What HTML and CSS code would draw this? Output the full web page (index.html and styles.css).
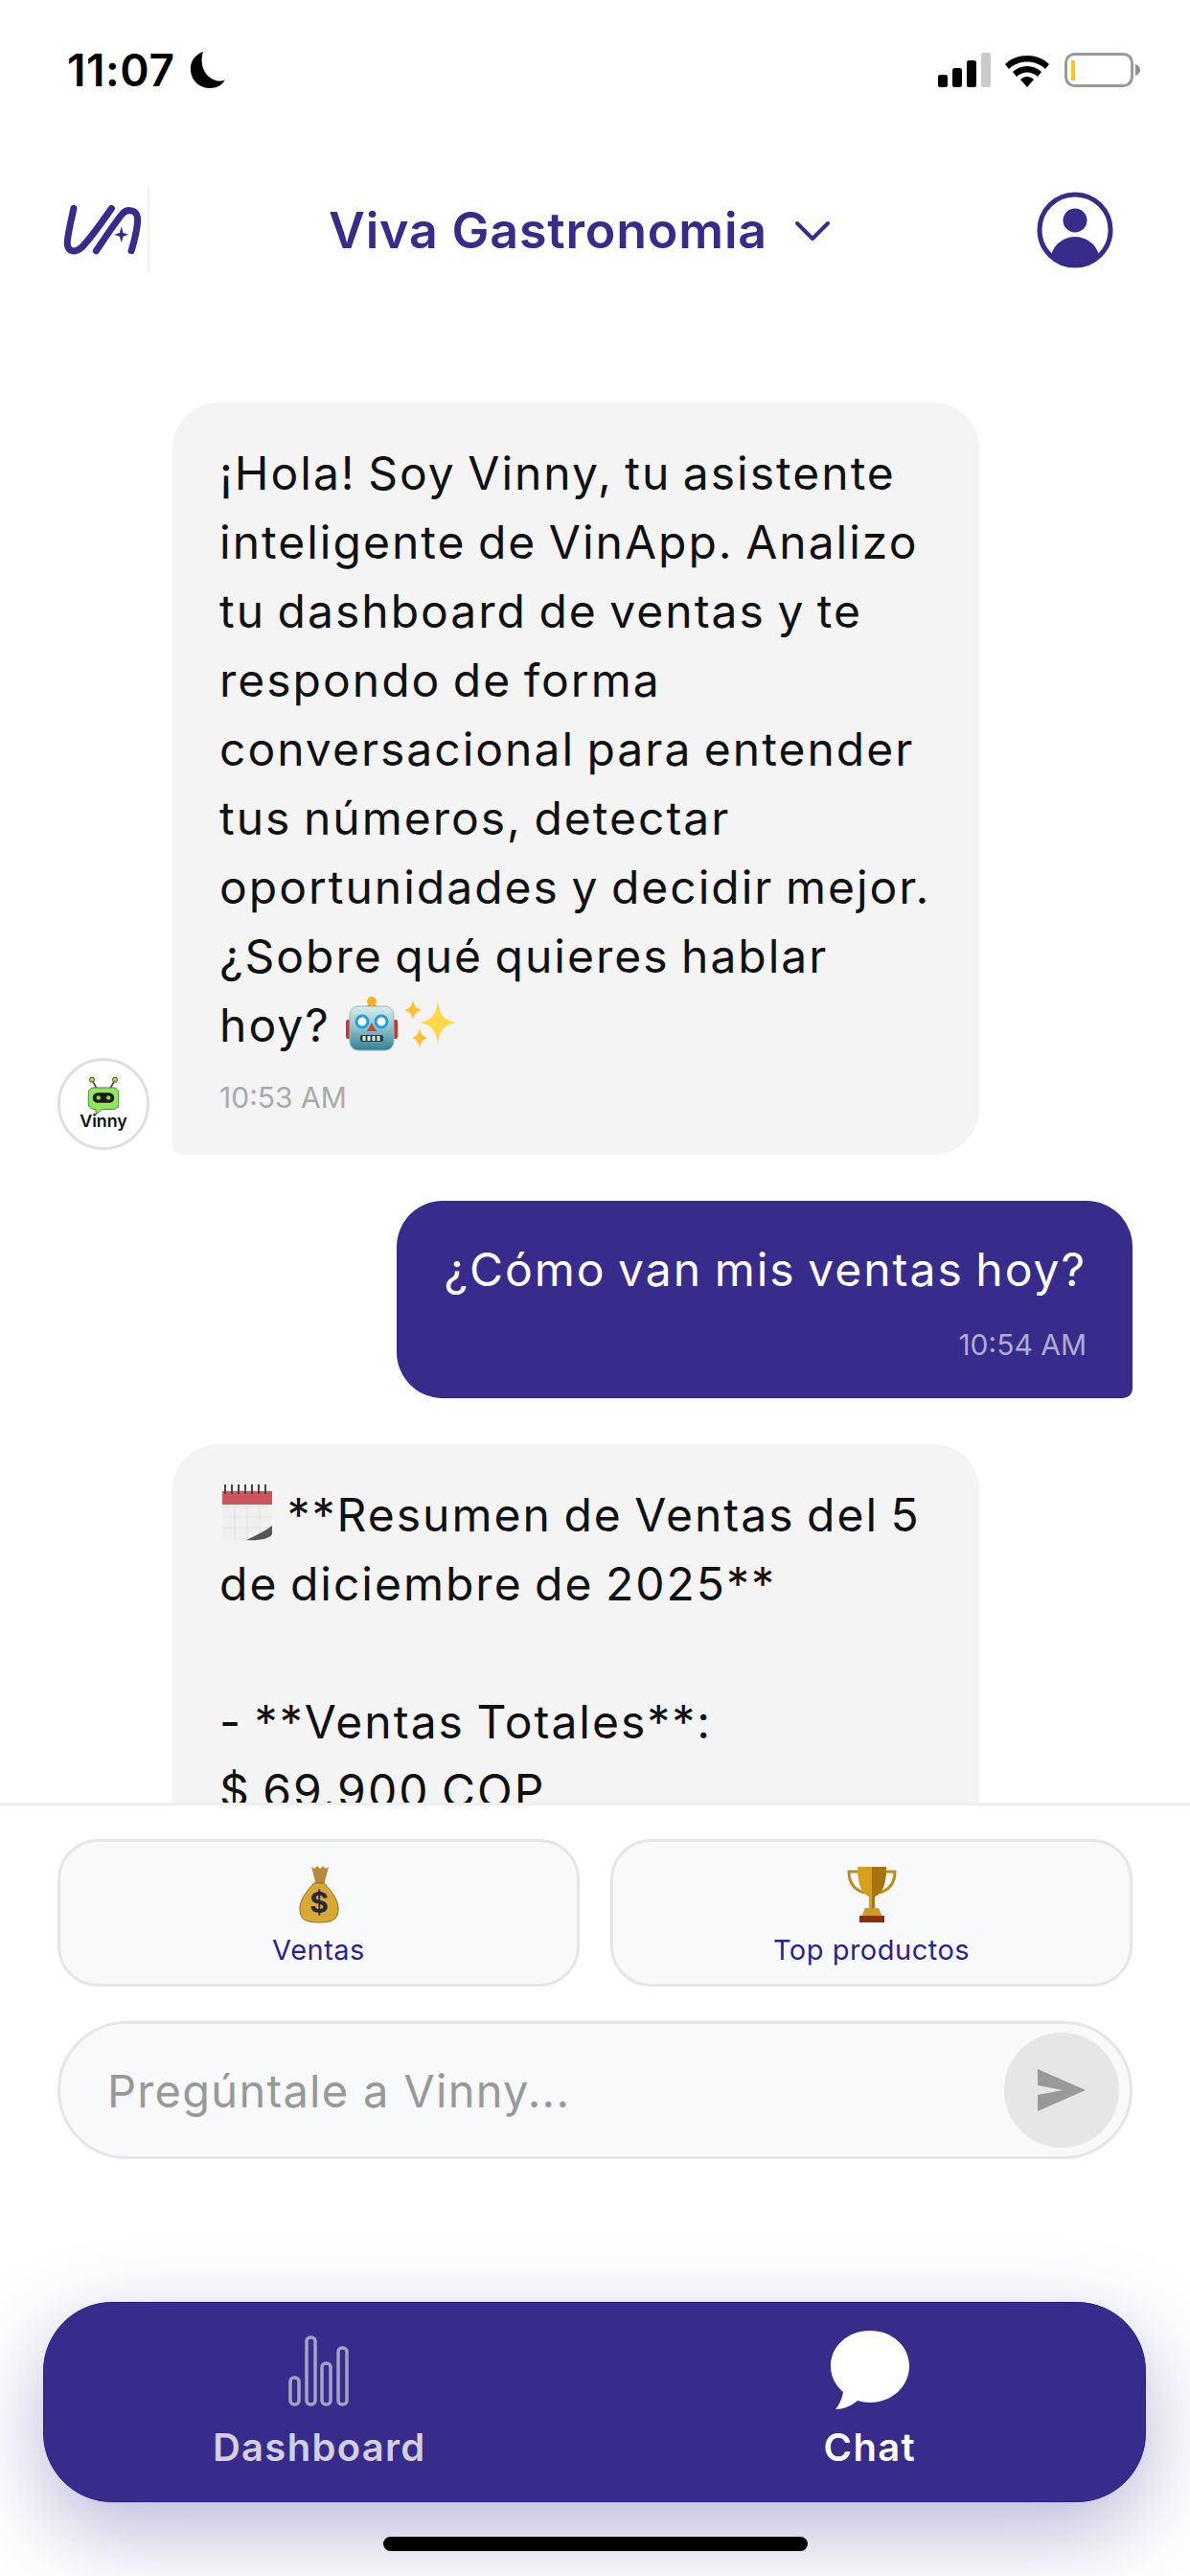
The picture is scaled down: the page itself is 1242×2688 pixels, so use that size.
FILE: index.html
```html
<!DOCTYPE html>
<html lang="es">
<head>
  <meta charset="UTF-8" />
  <meta name="viewport" content="width=device-width, initial-scale=1.0" />
  <title>Vinny Chat</title>
  <link rel="stylesheet" href="styles.css">
</head>
<body>
  <div class="app">
    <div class="status-bar">
      <div class="status-left">
        <span class="clock">11:07</span>
        <svg class="moon" viewBox="0 0 38 40"><path d="M14 1C5 4 0 12 1 21c1 11 10 18 20 18 7 0 13-3 16-9-3 2-8 2-12 0C15 26 10 13 14 1z"/></svg>
      </div>
      <svg class="status-icons" viewBox="0 0 212 36">
        <rect x="0" y="23" width="10" height="13" rx="2.5"/>
        <rect x="15" y="16" width="10" height="20" rx="2.5"/>
        <rect x="30" y="8" width="10" height="28" rx="2.5"/>
        <rect x="45" y="0" width="10" height="36" rx="2.5" fill="#cbcbcb"/>
        <path d="M70 12C82 0 104 0 116 12l-4 5C102 7 84 7 74 17z"/>
        <path d="M78 20c8-8 22-8 30 0l-4 5c-6-6-16-6-22 0z"/>
        <path d="M86 28c4-4 10-4 14 0l-7 8z"/>
        <rect x="133.500" y="1.500" width="69" height="33" rx="9" fill="#fff" stroke="#9a9a9a" stroke-width="3"/>
        <rect x="139" y="8" width="4" height="21" fill="#fcc419"/>
        <path d="M206 12c3 1 5 3 5 6s-2 5-5 6z" fill="#8e8e8e"/>
      </svg>
    </div>

    <header class="top-bar">
      <div class="brand">
        <svg viewBox="-3 -6 100 100" class="brand-logo">
          <path d="M15 18C12 32 7 52 8 58c1 9 9 9 16 3C35 50 47 32 57 18" fill="none" stroke="#372c8c" stroke-width="7.500" stroke-linecap="round"/>
          <path d="M40 65C50 50 62 32 69 24c5-6 16-5 17 5 0 12-4 26-7 36" fill="none" stroke="#372c8c" stroke-width="7.500" stroke-linecap="round"/>
          <path d="M68 38l2 7 6 2-6 2-2 7-2-7-6-2 6-2z" fill="#372c8c"/>
        </svg>
      </div>
      <div class="venue">
        <span class="venue-name">Viva Gastronomia</span>
        <svg class="chevron" viewBox="0 0 38 22"><path d="M3 3l16 16L35 3" fill="none" stroke="#372c8c" stroke-width="4" stroke-linecap="round" stroke-linejoin="round"/></svg>
      </div>
      <svg class="profile" viewBox="0 0 80 80">
        <defs><clipPath id="profileClip"><circle cx="40" cy="40" r="36"/></clipPath></defs>
        <circle cx="40" cy="40" r="37" fill="#fff" stroke="#372c8c" stroke-width="5"/>
        <circle cx="40" cy="30" r="12.500" fill="#372c8c"/>
        <circle cx="40" cy="73" r="26" fill="#372c8c" clip-path="url(#profileClip)"/>
      </svg>
    </header>

    <main class="chat">
      <div class="msg-row">
        <div class="avatar">
          <svg viewBox="0 0 96 96">
            <g transform="translate(48 41) scale(.8) translate(-48 -38)">
              <path d="M38 24l-5-9M58 24l5-9" stroke="#333" stroke-width="2"/>
              <circle cx="32" cy="13" r="3.500" fill="#9bdc3c" stroke="#333"/>
              <circle cx="64" cy="13" r="3.500" fill="#9bdc3c" stroke="#333"/>
              <path d="M35 24h26c5 0 8 3 8 8v14c0 5-3 8-8 8H46l-8 7-1-7c-6 0-10-3-10-8V32c0-5 3-8 8-8z" fill="#8fe85a" stroke="#444"/>
              <rect x="33" y="31" width="30" height="14" rx="7" fill="#1a1a1a"/>
              <circle cx="41" cy="38" r="3" fill="#9bdc3c"/>
              <circle cx="55" cy="38" r="3" fill="#9bdc3c"/>
            </g>
            <text x="48" y="74" text-anchor="middle" class="avatar-name">Vinny</text>
          </svg>
        </div>
        <div class="bubble bot">
          <p class="bubble-text">¡Hola! Soy Vinny, tu asistente<br>inteligente de VinApp. Analizo<br>tu dashboard de ventas y te<br>respondo de forma<br>conversacional para entender<br>tus números, detectar<br>oportunidades y decidir mejor.<br>¿Sobre qué quieres hablar<br>hoy?
            <svg class="emoji robot" viewBox="0 0 56 58">
              <defs><linearGradient id="robotFace" x1="0" y1="0" x2="0" y2="1"><stop offset="0" stop-color="#d8eef0"/><stop offset="0.5" stop-color="#8fc0c8"/><stop offset="1" stop-color="#2f7f94"/></linearGradient></defs>
              <rect x="1" y="25" width="7" height="20" rx="2" fill="#c8362f"/>
              <rect x="48" y="25" width="7" height="20" rx="2" fill="#c8362f"/>
              <path d="M22 12c0-3 12-3 12 0v2H22z" fill="#6b4aa0"/>
              <circle cx="28" cy="6" r="5" fill="#ffb020"/>
              <rect x="5" y="11" width="46" height="46" rx="9" fill="url(#robotFace)" stroke="#9ab8bc"/>
              <circle cx="18" cy="27" r="6" fill="#fff" stroke="#1ba0d8" stroke-width="3"/>
              <circle cx="38" cy="27" r="6" fill="#fff" stroke="#1ba0d8" stroke-width="3"/>
              <path d="M28 28l5 9H23z" fill="#c8453f"/>
              <rect x="16" y="41" width="24" height="7" rx="2" fill="#233f4a"/>
              <path d="M20 42v5M25 42v5M30 42v5M35 42v5" stroke="#e8e8d8" stroke-width="3"/>
            </svg><svg class="emoji sparkles" viewBox="0 0 56 56">
              <path d="M35 3c2 14 5 20 19 23-14 3-17 9-19 23-2-14-5-20-19-23 14-3 17-9 19-23z" fill="#ffd94a"/>
              <path d="M9 2c1 7 3 9 9 11-6 2-8 4-9 11-1-7-3-9-9-11 6-2 8-4 9-11z" fill="#ffc02e"/>
              <path d="M16 31c1 7 3 9 8 11-5 2-7 4-8 11-1-7-3-9-8-11 5-2 7-4 8-11z" fill="#ffc02e"/>
            </svg></p>
          <div class="bubble-time">10:53 AM</div>
        </div>
      </div>

      <div class="msg-row mine">
        <div class="bubble user">
          <p class="bubble-text">¿Cómo van mis ventas hoy?</p>
          <div class="bubble-time">10:54 AM</div>
        </div>
      </div>

      <div class="msg-row">
        <div class="avatar-space"></div>
        <div class="bubble bot">
          <p class="bubble-text"><svg class="emoji calendar" viewBox="0 0 54 60">
              <rect x="1" y="9" width="52" height="50" fill="#f0f0f0"/>
              <path d="M1 24h52M1 35h52M1 46h52M14 20v39M27 20v39M40 20v39" stroke="#e0e0e0"/>
              <rect x="1" y="8" width="52" height="14" fill="#c9565c"/>
              <path d="M4 1v10M11 1v10M18 1v10M25 1v10M32 1v10M39 1v10M46 1v10" stroke="#444" stroke-width="2"/>
              <path d="M53 44C45 50 36 54 26 59c12 1 24-1 27-6z" fill="#555"/>
            </svg> **Resumen de Ventas del 5<br>de diciembre de 2025**<br><br>- **Ventas Totales**:<br>$ 69.900 COP</p>
        </div>
      </div>
    </main>

    <section class="composer">
      <div class="quick-row">
        <button class="quick-btn">
          <svg class="quick-emoji" viewBox="0 0 60 60">
            <path d="M22 1l3 2 3-3 3 3 3-3 3 3 3-2-5 19h-8z" fill="#b98a3a"/>
            <path d="M25 18C16 27 9 37 10 47c1 9 6 12 20 12s19-3 20-12c1-10-6-20-15-29z" fill="#d9a935" stroke="#96691f"/>
            <text x="30" y="49" text-anchor="middle" class="bag-sign">$</text>
          </svg>
          <span class="quick-label">Ventas</span>
        </button>
        <button class="quick-btn">
          <svg class="quick-emoji" viewBox="0 0 60 60">
            <path d="M16 6H6c0 12 6 19 16 22M44 6h10c0 12-6 19-16 22" fill="none" stroke="#c08a1e" stroke-width="3"/>
            <path d="M15 1h30c0 18-4 28-12 31v12h-6V32C19 29 15 19 15 1z" fill="#d9a020"/>
            <path d="M30 1h15c0 18-4 28-12 31v12h-3z" fill="#a8740f"/>
            <path d="M23 44h14l4 9H19z" fill="#d09a2a"/>
            <rect x="17" y="52" width="26" height="7" fill="#8f2b12"/>
          </svg>
          <span class="quick-label">Top productos</span>
        </button>
      </div>
      <div class="ask-box">
        <span class="ask-placeholder">Pregúntale a Vinny...</span>
        <button class="send-btn">
          <svg viewBox="0 0 52 46"><path d="M1 1l50 22L1 45l0-17 26-5L1 18z" fill="#999"/></svg>
        </button>
      </div>
    </section>

    <nav class="tab-bar">
      <div class="tab">
        <svg class="tab-icon" viewBox="0 0 64 74">
          <g fill="none" stroke="#a5a2c6" stroke-width="3.500">
            <rect x="2" y="44" width="9" height="28" rx="4"/>
            <rect x="19" y="2" width="9" height="70" rx="4"/>
            <rect x="35" y="29" width="9" height="43" rx="4"/>
            <rect x="52" y="13" width="9" height="59" rx="4"/>
          </g>
        </svg>
        <span class="tab-label">Dashboard</span>
      </div>
      <div class="tab active">
        <svg class="tab-icon" viewBox="0 0 84 84">
          <path d="M42 1C19 1 1 17 1 38c0 11 5 20 13 27-1 7-4 13-8 18 8 0 16-3 23-9 4 1 9 2 13 2 23 0 41-17 41-38S65 1 42 1z" fill="#fff"/>
        </svg>
        <span class="tab-label">Chat</span>
      </div>
    </nav>
    <div class="home-bar"></div>
  </div>
</body>
</html>
```

FILE: styles.css
```css
* {
  box-sizing: border-box;
}
html, body {
  margin: 0;
  padding: 0;
}
body {
  font-family: 'Inter', 'Noto Sans', sans-serif;
  background: #fff;
  color: #111;
}
.app {
  position: relative;
  display: flex;
  flex-direction: column;
  height: 2688px;
  overflow: hidden;
}
.status-bar {
  display: flex;
  justify-content: space-between;
  align-items: center;
  height: 110px;
  padding: 36px 51px 0 70px;
  flex-shrink: 0;
}
.status-left {
  display: flex;
  align-items: center;
  gap: 15px;
}
.clock {
  font-size: 46px;
  font-weight: 600;
  color: #000;
  letter-spacing: 0.6px;
}
.moon {
  width: 38px;
  height: 40px;
}
.status-icons {
  width: 212px;
  height: 36px;
}
.top-bar {
  display: flex;
  align-items: center;
  justify-content: space-between;
  height: 260px;
  padding: 0 80px 0 60px;
  flex-shrink: 0;
}
.brand {
  width: 96px;
  height: 90px;
  border-right: 2px solid #f2f2f2;
  flex-shrink: 0;
}
.brand-logo {
  display: block;
  width: 94px;
  height: 94px;
}
.venue {
  display: flex;
  align-items: center;
  gap: 28px;
  margin-right: 28px;
}
.venue-name {
  font-size: 52px;
  font-weight: 600;
  color: #372c8c;
  letter-spacing: 0.8px;
}
.chevron {
  width: 38px;
  height: 22px;
  margin-top: 2px;
}
.profile {
  width: 80px;
  height: 80px;
  flex-shrink: 0;
}
.chat {
  flex: 1;
  min-height: 0;
  overflow: hidden;
  display: flex;
  flex-direction: column;
  gap: 48px;
  padding: 50px 60px 0;
}
.msg-row {
  display: flex;
  align-items: flex-end;
  gap: 24px;
  flex-shrink: 0;
}
.msg-row.mine {
  justify-content: flex-end;
}
.avatar {
  width: 96px;
  height: 96px;
  margin-bottom: 5px;
  border: 3px solid #e0e0e0;
  border-radius: 50%;
  flex-shrink: 0;
  overflow: hidden;
}
.avatar svg {
  display: block;
  width: 90px;
  height: 90px;
}
.avatar-name {
  font-size: 19px;
  font-weight: 600;
  fill: #111;
}
.avatar-space {
  width: 96px;
  flex-shrink: 0;
}
.bubble {
  border-radius: 48px;
}
.bubble.bot {
  width: 842px;
  padding: 38px 40px 40px 49px;
  background: #f4f4f4;
  border-bottom-left-radius: 10px;
}
.bubble.user {
  padding: 36px 48px 36px 49px;
  background: #372c8c;
  color: #fff;
  border-bottom-right-radius: 10px;
}
.bubble-text {
  margin: 0;
  font-size: 48px;
  line-height: 72px;
  letter-spacing: 2px;
  word-spacing: -3px;
  white-space: nowrap;
}
.emoji {
  display: inline-block;
  vertical-align: -10px;
}
.robot {
  width: 56px;
  height: 58px;
  margin-left: 3px;
}
.sparkles {
  width: 56px;
  height: 56px;
  margin-left: 6px;
}
.calendar {
  width: 54px;
  height: 60px;
  margin: 0 2px 0 2px;
}
.bubble-time {
  margin-top: 19px;
  font-size: 30px;
  line-height: 40px;
  color: #aaa;
  letter-spacing: 0;
}
.bubble.user .bubble-time {
  margin-top: 22px;
  text-align: right;
  color: #afabd1;
}
.composer {
  flex-shrink: 0;
  height: 495px;
  padding: 35px 60px 0;
  background: #fff;
  border-top: 3px solid #eee;
}
.quick-row {
  display: grid;
  grid-template-columns: 1fr 1fr;
  gap: 32px;
}
.quick-btn {
  display: flex;
  flex-direction: column;
  align-items: center;
  height: 154px;
  padding: 25px 0 0;
  background: #f8f9fa;
  border: 3px solid #e6e6e6;
  border-radius: 42px;
  font-family: inherit;
}
.quick-emoji {
  width: 60px;
  height: 60px;
}
.quick-label {
  margin-top: 8px;
  font-size: 29px;
  line-height: 40px;
  color: #2d1f8f;
  letter-spacing: 0.5px;
}
.bag-sign {
  font-size: 30px;
  font-weight: 700;
  fill: #26263f;
}
.ask-box {
  display: flex;
  align-items: center;
  justify-content: space-between;
  height: 144px;
  margin-top: 36px;
  padding: 0 11px 0 49px;
  background: #f8f9fa;
  border: 3px solid #e6e6e6;
  border-radius: 72px;
}
.ask-placeholder {
  font-size: 47px;
  color: #999;
  letter-spacing: 1.3px;
}
.send-btn {
  display: flex;
  align-items: center;
  justify-content: center;
  width: 120px;
  height: 120px;
  padding: 0;
  background: #e6e6e6;
  border: none;
  border-radius: 50%;
}
.send-btn svg {
  width: 52px;
  height: 46px;
}
.tab-bar {
  display: grid;
  grid-template-columns: 1fr 1fr;
  flex-shrink: 0;
  height: 209px;
  margin: 26px 46px 77px 45px;
  background: #372c8c;
  border: 1px solid #2a1e8c;
  border-radius: 72px;
  box-shadow: 0 30px 90px rgba(55, 44, 140, 0.35);
}
.tab {
  display: flex;
  flex-direction: column;
  align-items: center;
}
.tab-icon {
  width: 64px;
  height: 74px;
  margin-top: 34px;
}
.tab.active .tab-icon {
  width: 84px;
  height: 84px;
  margin-top: 28px;
}
.tab-label {
  position: absolute;
  margin-top: 126px;
  font-size: 40px;
  line-height: 50px;
  font-weight: 600;
  color: #d2d0dc;
  letter-spacing: 1.3px;
}
.tab.active .tab-label {
  color: #fff;
}
.home-bar {
  position: absolute;
  left: 400px;
  bottom: 26px;
  width: 443px;
  height: 15px;
  background: #000;
  border-radius: 8px;
}
```
